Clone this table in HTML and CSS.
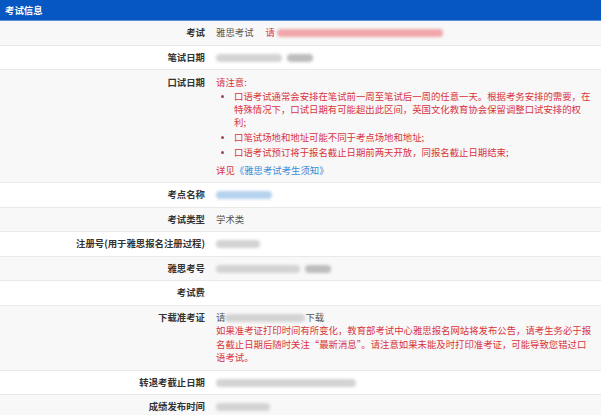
FILE: index.html
```html
<!DOCTYPE html>
<html lang="zh-CN">
<head>
<meta charset="utf-8">
<title>考试信息</title>
<link rel="stylesheet" href="styles.css">
</head>
<body>
<div class="panel">
  <div class="panel-head">考试信息</div>
  <div class="rows">
    <div class="row alt">
      <div class="label">考试</div>
      <div class="value">雅思考试<span class="gap"></span><span class="red">请</span><span class="blur b-red" style="width:166px"></span></div>
    </div>
    <div class="row">
      <div class="label">笔试日期</div>
      <div class="value"><span class="blur b-light" style="width:66px"></span><span class="blur b-dark" style="width:26px"></span></div>
    </div>
    <div class="row alt tall">
      <div class="label">口试日期</div>
      <div class="value">
        <div class="red">请注意:</div>
        <ul class="notes">
          <li><span class="li-text">口语考试通常会安排在笔试前一周至笔试后一周的任意一天。根据考务安排的需要，在<br>特殊情况下，口试日期有可能超出此区间，英国文化教育协会保留调整口试安排的权<br>利;</span></li>
          <li><span class="li-text">口笔试场地和地址可能不同于考点场地和地址;</span></li>
          <li><span class="li-text">口语考试预订将于报名截止日期前两天开放，同报名截止日期结束;</span></li>
        </ul>
        <div><span class="red">详见</span><a class="link" href="#">《雅思考试考生须知》</a></div>
      </div>
    </div>
    <div class="row">
      <div class="label">考点名称</div>
      <div class="value"><span class="blur b-blue" style="width:56px"></span></div>
    </div>
    <div class="row alt">
      <div class="label">考试类型</div>
      <div class="value">学术类</div>
    </div>
    <div class="row">
      <div class="label">注册号(用于雅思报名注册过程)</div>
      <div class="value"><span class="blur b-light" style="width:44px"></span></div>
    </div>
    <div class="row alt">
      <div class="label">雅思考号</div>
      <div class="value"><span class="blur b-light" style="width:84px"></span><span class="blur b-dark" style="width:26px"></span></div>
    </div>
    <div class="row">
      <div class="label">考试费</div>
      <div class="value"></div>
    </div>
    <div class="row alt">
      <div class="label">下载准考证</div>
      <div class="value">
        <div>请<span class="blur b-light" style="width:80px"></span>下载</div>
        <div class="red">如果准考证打印时间有所变化，教育部考试中心雅思报名网站将发布公告，请考生务必于报<br>名截止日期后随时关注“最新消息”。请注意如果未能及时打印准考证，可能导致您错过口<br>语考试。</div>
      </div>
    </div>
    <div class="row">
      <div class="label">转退考截止日期</div>
      <div class="value"><span class="blur b-light" style="width:140px"></span></div>
    </div>
    <div class="row alt">
      <div class="label">成绩发布时间</div>
      <div class="value"><span class="blur b-light" style="width:54px"></span></div>
    </div>
  </div>
</div>
</body>
</html>
```

FILE: styles.css
```css
html, body {
  margin: 0;
  padding: 0;
  background: #ffffff;
}

body {
  font-family: "Noto Sans CJK SC", "Noto Sans", sans-serif;
  font-size: 9.4px;
  color: #555555;
  overflow: hidden;
}

.panel {
  width: 601px;
}

.panel-head {
  height: 20px;
  line-height: 20px;
  padding-left: 5px;
  background: #0757c3;
  color: #ffffff;
  font-weight: bold;
  border-bottom: 1px solid #5b8fd6;
}

.rows {
  display: flex;
  flex-direction: column;
}

.row {
  display: grid;
  grid-template-columns: 211px 1fr;
  align-items: start;
  background: #ffffff;
  border-bottom: 1px solid #e9e9e9;
  line-height: 13.5px;
}

.row.alt {
  background: #f8f8f8;
}

.label {
  text-align: right;
  padding: 5px 6px 5px 0;
  font-weight: bold;
  color: #333333;
  white-space: nowrap;
}

.value {
  padding: 5px 4px 5px 5px;
  min-height: 13.5px;
  white-space: nowrap;
}

.row.tall .label,
.row.tall .value {
  padding-top: 6px;
}

.row.tall .value {
  line-height: 13px;
  padding-bottom: 5px;
}

.red {
  color: #d8333d;
}

.link {
  color: #3a8cd8;
  text-decoration: none;
}

.gap {
  display: inline-block;
  width: 12px;
}

.notes {
  list-style: none;
  margin: 1px 0 5px 0;
  padding: 0;
  color: #d8333d;
}

.notes li {
  display: flex;
  align-items: flex-start;
  margin-top: 2px;
}

.notes li:first-child {
  margin-top: 0;
}

.notes li::before {
  content: "";
  flex: none;
  width: 3px;
  height: 3px;
  border-radius: 50%;
  background: #9a4a4e;
  margin: 5px 10px 0 5px;
}

.blur {
  display: inline-block;
  height: 8px;
  vertical-align: middle;
  border-radius: 4px;
  filter: blur(1.6px);
}

.b-light {
  background: #d3d3d3;
}

.b-dark {
  background: #bdbdbd;
  margin-left: 5px;
}

.b-red {
  background: #f0a6aa;
  margin-left: 2px;
}

.b-blue {
  background: #b5d2ee;
}
```
